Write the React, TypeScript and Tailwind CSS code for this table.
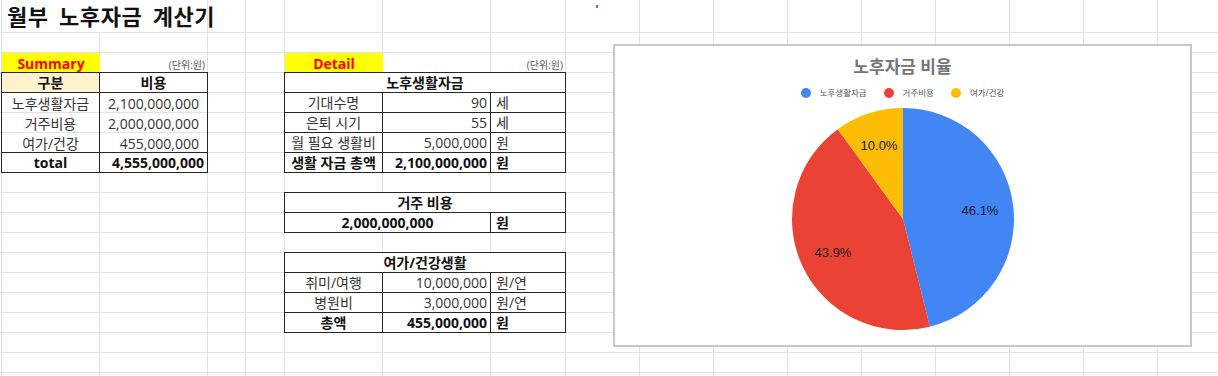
import type { ReactNode } from 'react';

const COLS = 17;
const ROWS = 19;

const box = '-ml-px -mt-px border border-[#262626]';
const center = 'flex items-center justify-center pt-px';
const right = 'flex items-center justify-end pt-px';
const left = 'flex items-center justify-start pt-px';

interface CellProps {
  className: string;
  children?: ReactNode;
}

function Cell({ className, children }: CellProps) {
  return <div className={`min-w-0 overflow-visible whitespace-nowrap ${className}`}>{children}</div>;
}

function Pie() {
  return (
    <svg width="240" height="230" viewBox="0 0 240 230" className="mt-[5px]">
      <path d="M120,115 L120,4 A111,111 0 0 1 146.93,222.68 Z" fill="#4285f4" />
      <path d="M120,115 L146.93,222.68 A111,111 0 0 1 54.76,25.2 Z" fill="#ea4335" />
      <path d="M120,115 L54.76,25.2 A111,111 0 0 1 120,4 Z" fill="#fbbc04" />
      <g fontFamily="'Liberation Sans', Arial, sans-serif" fontSize="13" fill="#1a1a1a" textAnchor="middle" dominantBaseline="central">
        <text x="197" y="106">46.1%</text>
        <text x="50" y="148">43.9%</text>
        <text x="96" y="41">10.0%</text>
      </g>
    </svg>
  );
}

const legend = [
  { label: '노후생활자금', color: 'bg-[#4285f4]' },
  { label: '거주비용', color: 'bg-[#ea4335]' },
  { label: '여가/건강', color: 'bg-[#fbbc04]' },
];

function Chart() {
  return (
    <div className="absolute left-[613px] top-[44px] flex h-[303px] w-[579px] flex-col items-center border-2 border-[#c8c8c8] bg-white">
      <div className="pt-[11px] text-[17px] font-bold leading-[20px] text-[#757575]">노후자금 비율</div>
      <div className="mt-[10px] flex h-[12px] items-center gap-[17px] text-[8.5px] text-[#555]">
        {legend.map((item) => (
          <div key={item.label} className="flex items-center gap-[9px]">
            <span className={`h-[10px] w-[10px] rounded-full ${item.color}`} />
            <span>{item.label}</span>
          </div>
        ))}
      </div>
      <Pie />
    </div>
  );
}

export default function App() {
  const grid = [];
  for (let r = 0; r < ROWS; r++) {
    for (let c = 0; c < COLS; c++) {
      grid.push(
        <div
          key={`${r}-${c}`}
          className="border-b border-r border-[#e1e1e1]"
          style={{ gridColumn: c + 1, gridRow: r + 1 }}
        />,
      );
    }
  }

  return (
    <div
      className="relative h-[376px] w-[1218px] overflow-hidden bg-white text-[14px] text-[#333]"
      style={{ fontFamily: "'Open Sans', 'Noto Sans CJK KR', sans-serif" }}
    >
      <div className="grid grid-cols-[2px_98px_108px_38px_39px_98px_108px_75px_repeat(9,74px)] grid-rows-[33px_repeat(18,20px)] leading-none">
        {grid}

        {/* title */}
        <Cell className="col-span-2 col-start-2 row-start-1 flex items-center border-b border-r border-[#e1e1e1] bg-white pl-[5px] text-[22px] font-bold tracking-[0.6px] text-[#111] [word-spacing:4px]">
          월부 노후자금 계산기
        </Cell>

        {/* summary */}
        <Cell className={`col-start-2 row-start-3 bg-[#ffff00] font-bold text-[#ff0000] ${center}`}>Summary</Cell>
        <Cell className="col-start-3 row-start-3 flex items-end justify-end pb-[3px] pr-[3px] text-[10px] text-[#555]">(단위:원)</Cell>
        <Cell className={`col-start-2 row-start-4 ${box} bg-[#fff2cc] font-bold text-[#111] ${center}`}>구분</Cell>
        <Cell className={`col-start-3 row-start-4 ${box} font-bold text-[#111] ${center}`}>비용</Cell>

        <Cell className={`col-start-2 row-start-5 -ml-px border-x border-[#262626] ${center}`}>노후생활자금</Cell>
        <Cell className={`col-start-3 row-start-5 border-r border-[#262626] pr-[8px] ${right}`}>2,100,000,000</Cell>
        <Cell className={`col-start-2 row-start-6 -ml-px border-x border-[#262626] ${center}`}>거주비용</Cell>
        <Cell className={`col-start-3 row-start-6 border-r border-[#262626] pr-[8px] ${right}`}>2,000,000,000</Cell>
        <Cell className={`col-start-2 row-start-7 -ml-px border-x border-[#262626] ${center}`}>여가/건강</Cell>
        <Cell className={`col-start-3 row-start-7 border-r border-[#262626] pr-[8px] ${right}`}>455,000,000</Cell>
        <Cell className={`col-start-2 row-start-8 ${box} font-bold text-[#111] ${center}`}>total</Cell>
        <Cell className={`col-start-3 row-start-8 ${box} pr-[3px] font-bold text-[#111] ${right}`}>4,555,000,000</Cell>

        {/* detail: 노후생활자금 */}
        <Cell className={`col-start-6 row-start-3 bg-[#ffff00] font-bold text-[#ff0000] ${center}`}>Detail</Cell>
        <Cell className="col-start-8 row-start-3 flex items-end justify-end pb-[3px] pr-[3px] text-[10px] text-[#555]">(단위:원)</Cell>
        <Cell className={`col-span-3 col-start-6 row-start-4 ${box} bg-white font-bold text-[#111] ${center}`}>노후생활자금</Cell>

        <Cell className={`col-start-6 row-start-5 ${box} ${center}`}>기대수명</Cell>
        <Cell className={`col-start-7 row-start-5 ${box} pr-[3px] ${right}`}>90</Cell>
        <Cell className={`col-start-8 row-start-5 ${box} pl-[5px] ${left}`}>세</Cell>
        <Cell className={`col-start-6 row-start-6 ${box} ${center}`}>은퇴 시기</Cell>
        <Cell className={`col-start-7 row-start-6 ${box} pr-[3px] ${right}`}>55</Cell>
        <Cell className={`col-start-8 row-start-6 ${box} pl-[5px] ${left}`}>세</Cell>
        <Cell className={`col-start-6 row-start-7 ${box} ${center}`}>월 필요 생활비</Cell>
        <Cell className={`col-start-7 row-start-7 ${box} pr-[3px] ${right}`}>5,000,000</Cell>
        <Cell className={`col-start-8 row-start-7 ${box} pl-[5px] ${left}`}>원</Cell>
        <Cell className={`col-start-6 row-start-8 ${box} font-bold text-[#111] ${center}`}>생활 자금 총액</Cell>
        <Cell className={`col-start-7 row-start-8 ${box} pr-[3px] font-bold text-[#111] ${right}`}>2,100,000,000</Cell>
        <Cell className={`col-start-8 row-start-8 ${box} pl-[5px] font-bold text-[#111] ${left}`}>원</Cell>

        {/* detail: 거주 비용 */}
        <Cell className={`col-span-3 col-start-6 row-start-10 ${box} bg-white font-bold text-[#111] ${center}`}>거주 비용</Cell>
        <Cell className={`col-span-2 col-start-6 row-start-11 ${box} bg-white font-bold text-[#111] ${center}`}>2,000,000,000</Cell>
        <Cell className={`col-start-8 row-start-11 ${box} pl-[5px] font-bold text-[#111] ${left}`}>원</Cell>

        {/* detail: 여가/건강생활 */}
        <Cell className={`col-span-3 col-start-6 row-start-13 ${box} bg-white font-bold text-[#111] ${center}`}>여가/건강생활</Cell>
        <Cell className={`col-start-6 row-start-14 ${box} ${center}`}>취미/여행</Cell>
        <Cell className={`col-start-7 row-start-14 ${box} pr-[3px] ${right}`}>10,000,000</Cell>
        <Cell className={`col-start-8 row-start-14 ${box} pl-[5px] ${left}`}>원/연</Cell>
        <Cell className={`col-start-6 row-start-15 ${box} ${center}`}>병원비</Cell>
        <Cell className={`col-start-7 row-start-15 ${box} pr-[3px] ${right}`}>3,000,000</Cell>
        <Cell className={`col-start-8 row-start-15 ${box} pl-[5px] ${left}`}>원/연</Cell>
        <Cell className={`col-start-6 row-start-16 ${box} font-bold text-[#111] ${center}`}>총액</Cell>
        <Cell className={`col-start-7 row-start-16 ${box} pr-[3px] font-bold text-[#111] ${right}`}>455,000,000</Cell>
        <Cell className={`col-start-8 row-start-16 ${box} pl-[5px] font-bold text-[#111] ${left}`}>원</Cell>
      </div>

      <span className="absolute left-[596px] top-[5px] h-[3px] w-[2px] bg-[#4a7ae0]" />
      <Chart />
    </div>
  );
}
